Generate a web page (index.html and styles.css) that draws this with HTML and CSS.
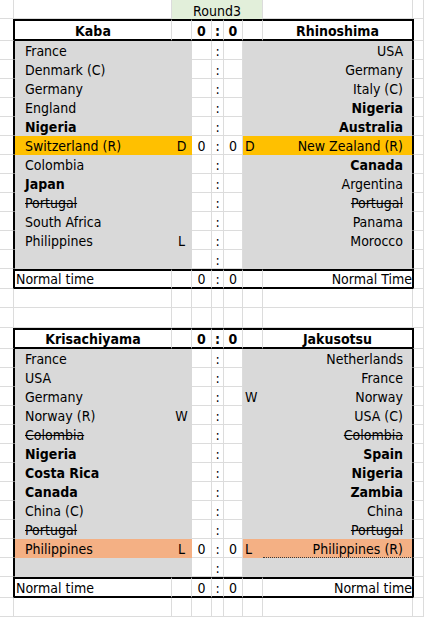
FILE: index.html
```html
<!DOCTYPE html>
<html>
<head>
<meta charset="utf-8">
<link rel="stylesheet" href="styles.css">
</head>
<body>
<div class="sheet">
  <div class="row top"><div></div><div></div><div class="rnd">Round3</div><div></div><div></div></div>

  <div class="row fr hd h22"><div></div><div>Kaba</div><div></div><div>0</div><div>:</div><div>0</div><div></div><div>Rhinoshima</div><div></div></div>
  <div class="row fr bd"><div></div><div>France</div><div></div><div></div><div>:</div><div></div><div></div><div>USA</div><div></div></div>
  <div class="row fr bd"><div></div><div>Denmark (C)</div><div></div><div></div><div>:</div><div></div><div></div><div>Germany</div><div></div></div>
  <div class="row fr bd"><div></div><div>Germany</div><div></div><div></div><div>:</div><div></div><div></div><div>Italy (C)</div><div></div></div>
  <div class="row fr bd"><div></div><div>England</div><div></div><div></div><div>:</div><div></div><div></div><div class="b">Nigeria</div><div></div></div>
  <div class="row fr bd"><div></div><div class="b">Nigeria</div><div></div><div></div><div>:</div><div></div><div></div><div class="b">Australia</div><div></div></div>
  <div class="row fr bd"><div></div><div class="or">Switzerland (R)</div><div class="or">D</div><div>0</div><div>:</div><div>0</div><div class="or">D</div><div class="or">New Zealand (R)</div><div></div></div>
  <div class="row fr bd"><div></div><div>Colombia</div><div></div><div></div><div>:</div><div></div><div></div><div class="b">Canada</div><div></div></div>
  <div class="row fr bd"><div></div><div class="b">Japan</div><div></div><div></div><div>:</div><div></div><div></div><div>Argentina</div><div></div></div>
  <div class="row fr bd"><div></div><div class="st">Portugal</div><div></div><div></div><div>:</div><div></div><div></div><div class="st">Portugal</div><div></div></div>
  <div class="row fr bd"><div></div><div>South Africa</div><div></div><div></div><div>:</div><div></div><div></div><div>Panama</div><div></div></div>
  <div class="row fr bd"><div></div><div>Philippines</div><div>L</div><div></div><div>:</div><div></div><div></div><div>Morocco</div><div></div></div>
  <div class="row fr bd"><div></div><div></div><div></div><div></div><div>:</div><div></div><div></div><div></div><div></div></div>
  <div class="row fr ft h20"><div></div><div>Normal time</div><div></div><div>0</div><div>:</div><div>0</div><div></div><div>Normal Time</div><div></div></div>

  <div class="row"><div></div><div></div><div></div><div></div><div></div><div></div><div></div><div></div><div></div></div>
  <div class="row h20"><div></div><div></div><div></div><div></div><div></div><div></div><div></div><div></div><div></div></div>

  <div class="row fr hd h21"><div></div><div>Krisachiyama</div><div></div><div>0</div><div>:</div><div>0</div><div></div><div>Jakusotsu</div><div></div></div>
  <div class="row fr bd"><div></div><div>France</div><div></div><div></div><div>:</div><div></div><div></div><div>Netherlands</div><div></div></div>
  <div class="row fr bd"><div></div><div>USA</div><div></div><div></div><div>:</div><div></div><div></div><div>France</div><div></div></div>
  <div class="row fr bd"><div></div><div>Germany</div><div></div><div></div><div>:</div><div></div><div>W</div><div>Norway</div><div></div></div>
  <div class="row fr bd"><div></div><div>Norway (R)</div><div>W</div><div></div><div>:</div><div></div><div></div><div>USA (C)</div><div></div></div>
  <div class="row fr bd"><div></div><div class="st">Colombia</div><div></div><div></div><div>:</div><div></div><div></div><div class="st">Colombia</div><div></div></div>
  <div class="row fr bd"><div></div><div class="b">Nigeria</div><div></div><div></div><div>:</div><div></div><div></div><div class="b">Spain</div><div></div></div>
  <div class="row fr bd"><div></div><div class="b">Costa Rica</div><div></div><div></div><div>:</div><div></div><div></div><div class="b">Nigeria</div><div></div></div>
  <div class="row fr bd"><div></div><div class="b">Canada</div><div></div><div></div><div>:</div><div></div><div></div><div class="b">Zambia</div><div></div></div>
  <div class="row fr bd"><div></div><div>China (C)</div><div></div><div></div><div>:</div><div></div><div></div><div>China</div><div></div></div>
  <div class="row fr bd"><div></div><div class="st">Portugal</div><div></div><div></div><div>:</div><div></div><div></div><div class="st">Portugal</div><div></div></div>
  <div class="row fr bd"><div></div><div class="sa">Philippines</div><div class="sa">L</div><div>0</div><div>:</div><div>0</div><div class="sa">L</div><div class="sa dt">Philippines (R)</div><div></div></div>
  <div class="row fr bd"><div></div><div></div><div></div><div></div><div>:</div><div></div><div></div><div></div><div></div></div>
  <div class="row fr ft h21"><div></div><div>Normal time</div><div></div><div>0</div><div>:</div><div>0</div><div></div><div>Normal time</div><div></div></div>

  <div class="row"><div></div><div></div><div></div><div></div><div></div><div></div><div></div><div></div><div></div></div>
</div>
</body>
</html>
```

FILE: styles.css
```css
* { box-sizing: border-box; }
html, body { margin: 0; padding: 0; background: #fff; }
body {
  width: 424px;
  height: 617px;
  overflow: hidden;
  font-family: "DejaVu Sans Condensed", "DejaVu Sans", sans-serif;
  font-stretch: condensed;
  font-size: 14px;
  color: #000;
}
.sheet { display: flex; flex-direction: column; }
.row {
  display: grid;
  grid-template-columns: 14px 158px 20px 20px 12px 19px 20px 150px 11px;
  height: 19px;
  flex: none;
}
.h20 { height: 20px; }
.h21 { height: 21px; }
.h22 { height: 22px; }
.row > div {
  border-right: 1px solid #dcdcdc;
  border-bottom: 1px solid #dcdcdc;
  display: flex;
  align-items: flex-end;
  line-height: 16px;
  white-space: nowrap;
}
.top > .rnd {
  grid-column: span 5;
  background: #e2efda;
  border-bottom: none;
  justify-content: center;
}

/* table frame */
.fr > :nth-child(1) { border-right-color: #000; }
.fr > :nth-child(2) { border-left: 1px solid #000; padding-left: 10px; }
.fr > :nth-child(3),
.fr > :nth-child(4),
.fr > :nth-child(5),
.fr > :nth-child(6) { justify-content: center; }
.fr > :nth-child(7) { padding-left: 2px; }
.fr > :nth-child(8) { border-right-color: #000; justify-content: flex-end; padding-right: 9px; }
.fr > :nth-child(9) { border-left: 1px solid #000; }

/* header and footer rows */
.hd > :nth-child(n+2):nth-child(-n+8),
.ft > :nth-child(n+2):nth-child(-n+8) {
  border-top: 2px solid #000;
  border-bottom: 2px solid #000;
}
.hd > div { font-weight: bold; }
.hd > :nth-child(2) { justify-content: center; padding-left: 0; }
.hd > :nth-child(8) { justify-content: center; padding-right: 0; }
.ft > :nth-child(2) { padding-left: 1px; }
.ft > :nth-child(8) { padding-right: 0; }

/* body rows: grey team blocks */
.bd > :nth-child(2),
.bd > :nth-child(3),
.bd > :nth-child(7),
.bd > :nth-child(8) {
  background: #d9d9d9;
  border-bottom-color: transparent;
}
.bd > :nth-child(2),
.bd > :nth-child(3),
.bd > :nth-child(7) { border-right-color: transparent; }

.bd > .or { background: #ffc000; }
.bd > .sa { background: #f4b084; }
.bd > .dt { border-bottom: 1px dotted #3a3a3a; }

.b { font-weight: bold; }
.st { text-decoration: line-through; }
```
